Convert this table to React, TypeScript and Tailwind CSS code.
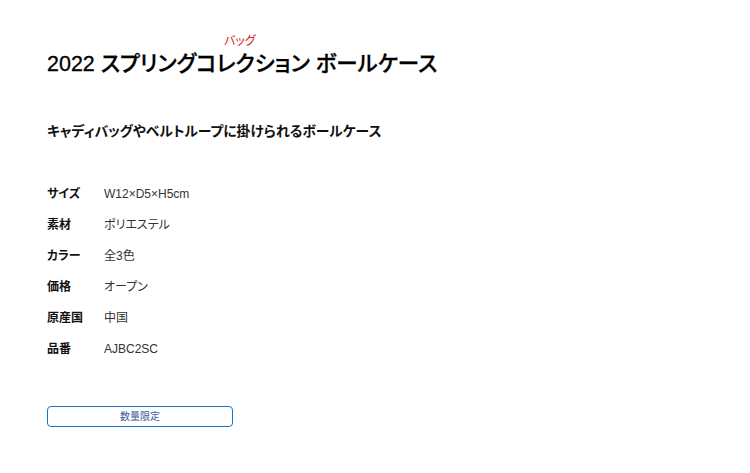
import React from "react";

const specs: [string, string][] = [
  ["サイズ", "W12×D5×H5cm"],
  ["素材", "ポリエステル"],
  ["カラー", "全3色"],
  ["価格", "オープン"],
  ["原産国", "中国"],
  ["品番", "AJBC2SC"],
];

export default function App() {
  return (
    <div
      className="w-[750px] h-[473px] bg-white text-[#111] px-[47px] pt-[52px]"
      style={{
        fontFamily: '"Liberation Sans", "Noto Sans CJK JP", sans-serif',
        fontFeatureSettings: '"palt"',
      }}
    >
      <h1 className="relative text-[21.5px] leading-[24px] font-medium text-black [-webkit-text-stroke:0.3px_black]">
        <span className="absolute left-[177px] top-[-17px] text-[12px] leading-[12px] text-[#d8202c] font-normal [-webkit-text-stroke:0px]">
          バッグ
        </span>
        2022 スプリングコレクション ボールケース
      </h1>
      <p className="mt-[46px] text-[13.8px] leading-[20px] font-bold text-[#111]">
        キャディバッグやベルトループに掛けられるボールケース
      </p>
      <dl className="mt-[44px] flex flex-col gap-[15px]">
        {specs.map(([k, v]) => (
          <div key={k} className="flex items-center h-[16px] text-[12px]">
            <dt className="w-[57px] font-bold text-[#111]">{k}</dt>
            <dd className="text-[#333]">{v}</dd>
          </div>
        ))}
      </dl>
      <div className="mt-[49px] w-[186px] h-[21px] border border-[#1e73be] rounded-[4px] flex items-center justify-center text-[10px] text-[#3a5a9a]">
        数量限定
      </div>
    </div>
  );
}
